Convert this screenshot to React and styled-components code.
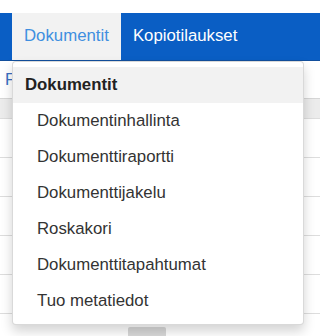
import React from 'react';
import styled, { createGlobalStyle } from 'styled-components';

const GlobalStyle = createGlobalStyle`
  html, body {
    margin: 0;
    padding: 0;
    overflow: hidden;
    background: #ffffff;
    font-family: "Liberation Sans", Arial, sans-serif;
  }
`;

const Page = styled.div`
  position: relative;
  width: 100%;
  height: 336px;
  overflow: hidden;
`;

const TopStrip = styled.div`
  height: 13px;
  background: #ffffff;
`;

const Navbar = styled.nav`
  display: flex;
  align-items: stretch;
  padding-left: 12px;
  background: #0a5ec4;
  border-bottom: 1px solid #124f9c;
`;

const NavItem = styled.div`
  position: relative;
  padding: 13px 12px 14px;
  font-size: 16.8px;
  line-height: 20px;
  white-space: nowrap;
  color: ${({ active }) => (active ? '#3f8fe0' : '#ffffff')};
  background: ${({ active }) => (active ? '#f2f2f2' : 'transparent')};
`;

const Menu = styled.div`
  position: absolute;
  top: calc(100% + 1px);
  left: 0;
  z-index: 10;
  width: 290px;
  padding: 5px 0;
  background: #ffffff;
  border: 1px solid rgba(0, 0, 0, 0.15);
  border-radius: 4px;
  box-shadow: 0 6px 12px rgba(0, 0, 0, 0.175);
`;

const MenuHeader = styled.div`
  height: 36px;
  padding-left: 12px;
  line-height: 36px;
  font-size: 16.8px;
  font-weight: bold;
  color: #222222;
  background: #f2f2f2;
`;

const MenuItem = styled.div`
  height: 36px;
  padding-left: 24px;
  line-height: 36px;
  font-size: 16.8px;
  color: #333333;
`;

const SubBar = styled.div`
  height: 37px;
  padding-left: 5px;
  display: flex;
  align-items: center;
  font-size: 16.8px;
  color: #3a6ec2;
  white-space: nowrap;
`;

const Table = styled.div`
  border-top: 1px solid #d6d6d6;
`;

const TableHead = styled.div`
  height: 19px;
  background: #ececec;
  border-bottom: 1px solid #dddddd;
`;

const TableRow = styled.div`
  display: flex;
  align-items: flex-start;
  height: 38px;
  border-bottom: 1px solid #dddddd;
`;

const Cell = styled.div`
  width: ${({ width }) => width};
  flex-shrink: 0;
`;

const RowButton = styled.div`
  width: 38px;
  height: 24px;
  margin-top: 13px;
  background: #d8d8d8;
  border-radius: 2px;
`;

const menuItems = [
  'Dokumentinhallinta',
  'Dokumenttiraportti',
  'Dokumenttijakelu',
  'Roskakori',
  'Dokumenttitapahtumat',
  'Tuo metatiedot',
];

const App = () => {
  const rows = [0, 1, 2, 3, 4, 5];
  return (
    <Page>
      <GlobalStyle />
      <TopStrip />
      <Navbar>
        <NavItem active>
          Dokumentit
          <Menu>
            <MenuHeader>Dokumentit</MenuHeader>
            {menuItems.map((item) => (
              <MenuItem key={item}>{item}</MenuItem>
            ))}
          </Menu>
        </NavItem>
        <NavItem>Kopiotilaukset</NavItem>
      </Navbar>
      <SubBar>Favoriitit</SubBar>
      <Table>
        <TableHead />
        {rows.map((n) => (
          <TableRow key={n}>
            <Cell width="128px" />
            {n === 5 && <RowButton />}
          </TableRow>
        ))}
      </Table>
    </Page>
  );
};

export default App;
